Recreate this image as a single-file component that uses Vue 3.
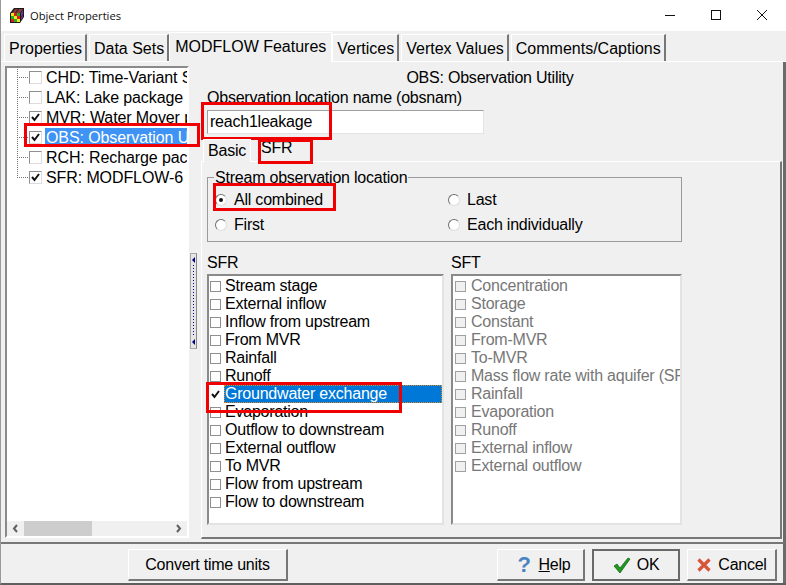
<template>
  <div class="window">
    <div class="titlebar">
      <svg class="app-icon" width="17" height="17" viewBox="0 0 17 17">
        <path d="M1 6l4-5h10v9l-4 6H1z" fill="#1a1a1a" />
        <path d="M3 6l3-4h3L6 6zM7 6l3-4h4l-3 4z" fill="#8a3a3a" />
        <rect x="2" y="6" width="3" height="3" fill="#f5e616" />
        <rect x="5" y="6" width="3" height="3" fill="#e01b1b" />
        <rect x="8" y="6" width="3" height="3" fill="#22b322" />
        <rect x="2" y="9" width="3" height="3" fill="#22b322" />
        <rect x="5" y="9" width="3" height="3" fill="#f5e616" />
        <rect x="8" y="9" width="3" height="3" fill="#e01b1b" />
        <rect x="2" y="12" width="3" height="3" fill="#e01b1b" />
        <rect x="5" y="12" width="3" height="3" fill="#22b322" />
        <rect x="8" y="12" width="3" height="3" fill="#f5e616" />
        <path d="M12 6l2-3v4l-2 3zM12 11l2-3v2l-2 3z" fill="#7d2fa8" />
      </svg>
      <span class="title-text">Object Properties</span>
      <div class="win-buttons">
        <svg width="46" height="31" viewBox="0 0 46 31"><path d="M18 15.500h10" stroke="#111" fill="none" /></svg>
        <svg width="46" height="31" viewBox="0 0 46 31"><rect x="18.500" y="10.500" width="9" height="9" stroke="#111" fill="none" /></svg>
        <svg width="46" height="31" viewBox="0 0 46 31"><path d="M18 10l10 10M28 10l-10 10" stroke="#111" fill="none" /></svg>
      </div>
    </div>

    <div class="tabs">
      <div v-for="tab in tabs" :key="tab" class="tab" :class="{ active: tab === 'MODFLOW Features' }">{{ tab }}</div>
    </div>

    <div class="page">
      <div class="left">
        <div class="tree">
          <div class="tree-rows">
            <div v-for="(item, i) in packages" :key="item.label" class="tree-row" :class="{ last: i === packages.length - 1 }">
              <span class="twig"></span>
              <span class="check" :class="{ on: item.on }">
                <svg v-if="item.on" width="11" height="11" viewBox="0 0 11 11"><path d="M2 5l2.500 3L9 2" stroke="#111" stroke-width="2" fill="none" /></svg>
              </span>
              <span class="tree-label" :class="{ selected: item.selected }">{{ item.label }}</span>
            </div>
          </div>
          <div class="hscroll">
            <svg width="17" height="15" viewBox="0 0 17 15"><path d="M10 4L7 7.500 10 11" stroke="#606060" stroke-width="2" fill="none" /></svg>
            <div class="hscroll-track"><div class="hscroll-thumb"></div></div>
            <svg width="17" height="15" viewBox="0 0 17 15"><path d="M7 4l3 3.500L7 11" stroke="#606060" stroke-width="2" fill="none" /></svg>
          </div>
        </div>
      </div>

      <div class="splitter">
        <div class="grip">
          <span class="arrow"></span>
          <span class="grip-dots"></span>
          <span class="arrow"></span>
        </div>
      </div>

      <div class="right">
        <div class="heading">OBS: Observation Utility</div>
        <div class="name-label">Observation location name (obsnam)</div>
        <div class="name-input">reach1leakage</div>
        <div class="subtabs">
          <div class="subtab active">Basic</div>
          <div class="subtab raised">SFR</div>
        </div>
        <div class="subpage">
          <fieldset class="location">
            <legend>Stream observation location</legend>
            <div class="radios">
              <label v-for="r in radios" :key="r.label" class="radio-row">
                <span class="radio" :class="{ on: r.on }"></span>{{ r.label }}
              </label>
            </div>
          </fieldset>
          <div class="lists">
            <div class="list-col sfr">
              <div class="list-title">SFR</div>
              <div class="list">
                <div v-for="row in sfrRows" :key="row" class="list-row" :class="{ picked: row === 'Groundwater exchange' }">
                  <span class="box" :class="{ on: row === 'Groundwater exchange' }">
                    <svg v-if="row === 'Groundwater exchange'" width="11" height="11" viewBox="0 0 11 11"><path d="M2 5l2.500 3L9 2" stroke="#111" stroke-width="2" fill="none" /></svg>
                  </span>
                  <span class="row-text">{{ row }}</span>
                </div>
              </div>
            </div>
            <div class="list-col sft">
              <div class="list-title">SFT</div>
              <div class="list disabled">
                <div v-for="row in sftRows" :key="row" class="list-row">
                  <span class="box"></span>
                  <span class="row-text">{{ row }}</span>
                </div>
              </div>
            </div>
          </div>
        </div>
      </div>
    </div>

    <div class="footer">
      <button class="btn convert">Convert time units</button>
      <span class="spacer"></span>
      <button class="btn action help">
        <svg width="18" height="22" viewBox="0 0 18 22"><text x="9" y="18" text-anchor="middle" class="q-mark">?</text></svg>
        <span><u>H</u>elp</span>
      </button>
      <button class="btn action ok">
        <svg width="18" height="18" viewBox="0 0 18 18"><path d="M1 10l3-2 3 4 8-10 2 1L7 17z" fill="#1f9a1f" stroke="#0c5a0c" stroke-width="0.700" /></svg>
        <span>OK</span>
      </button>
      <button class="btn action cancel">
        <svg width="16" height="16" viewBox="0 0 16 16"><path d="M2.500 2.500l11 11M13.500 2.500l-11 11" stroke="#d9553a" stroke-width="3.200" fill="none" /></svg>
        <span>Cancel</span>
      </button>
    </div>

    <div class="mark" style="left:23px;top:123px;width:170px;height:18px"></div>
    <div class="mark" style="left:200px;top:102px;width:125px;height:32px"></div>
    <div class="mark" style="left:257px;top:139px;width:49px;height:19px"></div>
    <div class="mark" style="left:212px;top:183px;width:117px;height:22px"></div>
    <div class="mark" style="left:205px;top:382px;width:190px;height:25px"></div>
  </div>
</template>

<script setup>
const tabs = ['Properties', 'Data Sets', 'MODFLOW Features', 'Vertices', 'Vertex Values', 'Comments/Captions']

const packages = [
  { label: 'CHD: Time-Variant Specified Head', on: false },
  { label: 'LAK: Lake package', on: false },
  { label: 'MVR: Water Mover package', on: true },
  { label: 'OBS: Observation Utility', on: true, selected: true },
  { label: 'RCH: Recharge package', on: false },
  { label: 'SFR: MODFLOW-6 Stream', on: true }
]

const radios = [
  { label: 'All combined', on: true },
  { label: 'Last', on: false },
  { label: 'First', on: false },
  { label: 'Each individually', on: false }
]

const sfrRows = [
  'Stream stage', 'External inflow', 'Inflow from upstream', 'From MVR', 'Rainfall', 'Runoff',
  'Groundwater exchange', 'Evaporation', 'Outflow to downstream', 'External outflow', 'To MVR',
  'Flow from upstream', 'Flow to downstream'
]

const sftRows = [
  'Concentration', 'Storage', 'Constant', 'From-MVR', 'To-MVR', 'Mass flow rate with aquifer (SFT)',
  'Rainfall', 'Evaporation', 'Runoff', 'External inflow', 'External outflow'
]
</script>

<style>
html, body {
  margin: 0;
  background: #f0f0f0;
}
</style>

<style scoped>
.window {
  position: relative;
  width: 786px;
  height: 585px;
  overflow: hidden;
  display: flex;
  flex-direction: column;
  background: #f0f0f0;
  font-family: "Liberation Sans", Arial, sans-serif;
  font-size: 16px;
  color: #000;
  box-sizing: border-box;
  border-bottom: 2px solid #5f5f5f;
  border-left: 1px solid #9a9a9a;
}

.titlebar {
  height: 31px;
  flex: none;
  display: flex;
  align-items: center;
  background: #fff;
  padding: 0 1px 0 8px;
}

.app-icon {
  margin-right: 4px;
}

.title-text {
  font-family: "Open Sans", sans-serif;
  font-size: 11.200px;
  color: #111;
}

.win-buttons {
  margin-left: auto;
  display: flex;
}

.win-buttons svg {
  display: block;
}

.tabs {
  height: 31px;
  flex: none;
  display: flex;
  align-items: flex-end;
  gap: 2px;
  padding-left: 3px;
  border-bottom: 1px solid #fff;
  box-sizing: border-box;
}

.tab {
  height: 26px;
  line-height: 27px;
  padding: 0 3px 0 4px;
  border: 1px solid #fff;
  border-right: 2px solid #777;
  border-bottom: 0;
  box-sizing: content-box;
  white-space: nowrap;
}

.tab.active {
  height: 29px;
  line-height: 27px;
  margin: 0 -2px 0 -2px;
  padding: 0 5px;
  border-right: 1px solid #fff;
  position: relative;
  background: #f0f0f0;
  top: 1px;
}

.page {
  flex: 1;
  min-height: 0;
  display: flex;
  padding-top: 4px;
  border-right: 3px solid #6b6b6b;
}

.left {
  width: 184px;
  margin-left: 4px;
  flex: none;
  padding-bottom: 4px;
}

.tree {
  height: 100%;
  box-sizing: border-box;
  display: flex;
  flex-direction: column;
  background: #fff;
  border: 2px solid #8a8a8a;
  border-right-color: #fff;
  border-bottom-color: #fff;
}

.tree-rows {
  flex: 1;
  overflow: hidden;
  margin-top: -1px;
  letter-spacing: -0.100px;
}

.tree-row {
  height: 20px;
  display: flex;
  align-items: center;
  white-space: nowrap;
  overflow: hidden;
}

.twig {
  flex: none;
  align-self: stretch;
  width: 11px;
  margin-left: 10px;
  margin-right: 1px;
  background:
    repeating-linear-gradient(to bottom, #777 0 1px, transparent 1px 2px) left top / 1px 100% no-repeat,
    repeating-linear-gradient(to right, #777 0 1px, transparent 1px 2px) left 10px / 100% 1px no-repeat;
}

.tree-row.last .twig {
  background:
    repeating-linear-gradient(to bottom, #777 0 1px, transparent 1px 2px) left top / 1px 10px no-repeat,
    repeating-linear-gradient(to right, #777 0 1px, transparent 1px 2px) left 10px / 100% 1px no-repeat;
}

.check {
  flex: none;
  width: 11px;
  height: 11px;
  border: 1px solid #8f8f8f;
  border-right-color: #ddd;
  border-bottom-color: #ddd;
  background: #fff;
  margin-right: 3px;
  display: block;
}

.check svg,
.box svg {
  display: block;
}

.tree-label {
  flex: none;
  padding: 0 1px 0 1px;
  height: 19px;
  line-height: 19px;
}

.tree-label.selected {
  background: #3f93f5;
  color: #fff;
  flex: 1;
}

.hscroll {
  flex: none;
  height: 15px;
  display: flex;
  align-items: stretch;
  background: #f0f0f0;
}

.hscroll svg {
  display: block;
  flex: none;
}

.hscroll-track {
  flex: 1;
}

.hscroll-thumb {
  width: 68px;
  height: 100%;
  background: #cdcdcd;
}

.splitter {
  width: 9px;
  flex: none;
  display: flex;
  align-items: center;
  justify-content: center;
  padding-bottom: 6px;
}

.grip {
  width: 7px;
  height: 96px;
  box-sizing: border-box;
  border: 1px solid #a8a8a8;
  border-right-color: #888;
  background: #e6e6e6;
  display: flex;
  flex-direction: column;
  align-items: center;
  justify-content: space-between;
  padding: 3px 0;
}

.arrow {
  width: 0;
  height: 0;
  border-top: 3px solid transparent;
  border-bottom: 3px solid transparent;
  border-right: 3px solid #000080;
}

.grip-dots {
  flex: 1;
  width: 1px;
  margin: 2px 0;
  background: repeating-linear-gradient(to bottom, #000080 0 1px, transparent 1px 3px);
}

.right {
  flex: 1;
  min-width: 0;
  display: flex;
  flex-direction: column;
  padding: 1px 1px 3px 3px;
  letter-spacing: -0.220px;
}

.heading {
  height: 18px;
  line-height: 18px;
  text-align: center;
  margin-top: 2px;
  padding-right: 3px;
}

.name-label {
  height: 18px;
  line-height: 18px;
  margin-left: 6px;
  margin-top: 2px;
}

.name-input {
  width: 277px;
  height: 24px;
  box-sizing: border-box;
  margin-left: 6px;
  margin-top: 3px;
  background: #fff;
  border: 1px solid #a0a0a0;
  border-right-color: #e3e3e3;
  border-bottom-color: #e3e3e3;
  line-height: 22px;
  padding-left: 2px;
}

.subtabs {
  height: 27px;
  flex: none;
  display: flex;
  align-items: flex-end;
  margin-left: 2px;
}

.subtab {
  height: 22px;
  line-height: 21px;
  padding: 0 4px;
  margin-right: 6px;
  position: relative;
}

.subtab.raised {
  margin-bottom: 2px;
}

.subtab.active {
  border: 1px solid #fff;
  border-bottom: 0;
  background: #f0f0f0;
  z-index: 1;
  top: 1px;
}

.subpage {
  flex: 1;
  min-height: 0;
  border: 1px solid #fff;
  border-right: 2px solid #777;
  border-bottom: 2px solid #777;
  padding: 5px 0 0 5px;
  box-sizing: border-box;
}

.location {
  width: 475px;
  height: 75px;
  box-sizing: border-box;
  margin: 0;
  padding: 0 6px;
  border: 1px solid #9a9a9a;
  min-width: 0;
}

.location legend {
  padding: 0 1px;
  font-size: 16px;
  line-height: 20px;
  position: relative;
  top: 1px;
}

.radios {
  display: grid;
  grid-template-columns: 233px 1fr;
  grid-auto-rows: 25px;
}

.radio-row {
  display: flex;
  align-items: center;
  gap: 7px;
  white-space: nowrap;
  padding-left: 1px;
}

.radio {
  width: 12px;
  height: 12px;
  box-sizing: border-box;
  border-radius: 50%;
  border: 1px solid #707070;
  border-right-color: #ddd;
  border-bottom-color: #ddd;
  background: #fff;
  display: flex;
  align-items: center;
  justify-content: center;
}

.radio.on::after {
  content: "";
  width: 4px;
  height: 4px;
  border-radius: 50%;
  background: #111;
}

.lists {
  display: flex;
  gap: 7px;
  margin-top: 12px;
}

.list-col.sfr {
  width: 237px;
}

.list-col.sft {
  width: 231px;
}

.list-title {
  height: 18px;
  line-height: 18px;
  margin-bottom: 2px;
}

.list {
  height: 251px;
  box-sizing: border-box;
  overflow: hidden;
  background: #fff;
  border: 2px solid #8a8a8a;
  border-right: 2px solid #e3e3e3;
  border-bottom: 2px solid #e3e3e3;
  padding-top: 1px;
}

.list-row {
  height: 18px;
  display: flex;
  align-items: center;
  white-space: nowrap;
}

.box {
  flex: none;
  width: 9px;
  height: 9px;
  margin: 0 3px 0 1px;
  border: 1px solid #8f8f8f;
  background: #fff;
  display: block;
}

.list-row.picked .box {
  width: 11px;
  height: 11px;
  margin: 0 2px 0 0;
  border-color: #fff;
}

.row-text {
  padding-left: 1px;
  flex: 1;
  line-height: 18px;
}

.list-row.picked .row-text {
  background: #0078d7;
  color: #fff;
  outline: 1px dotted #e08a20;
  outline-offset: -1px;
}

.list.disabled .row-text {
  color: #777;
  padding-left: 2px;
}

.list.disabled .box {
  margin-left: 2px;
  background: #f0f0f0;
  border-color: #a0a0a0;
}

.footer {
  height: 41px;
  flex: none;
  box-sizing: border-box;
  display: flex;
  align-items: flex-start;
  gap: 7px;
  padding: 5px 6px 0 127px;
  border-top: 2px solid #777;
  border-right: 3px solid #6b6b6b;
}

.spacer {
  flex: 1;
}

.btn {
  height: 32px;
  box-sizing: border-box;
  background: #f0f0f0;
  border: 1px solid #fff;
  border-right: 2px solid #777;
  border-bottom: 2px solid #777;
  font: inherit;
  letter-spacing: -0.250px;
  color: #000;
  display: flex;
  align-items: center;
  justify-content: center;
  gap: 6px;
  padding: 0;
}

.btn.convert {
  width: 160px;
}

.btn.action {
  width: 88px;
}

.btn.cancel {
  width: 90px;
}

.btn.help {
  padding-left: 4px;
}

.btn.ok {
  border: 2px solid #696969;
}

.q-mark {
  font-family: "Liberation Sans", Arial, sans-serif;
  font-size: 22px;
  font-weight: 700;
  fill: #4a84c0;
}

.mark {
  position: absolute;
  border: 3px solid #f00000;
  pointer-events: none;
}
</style>
